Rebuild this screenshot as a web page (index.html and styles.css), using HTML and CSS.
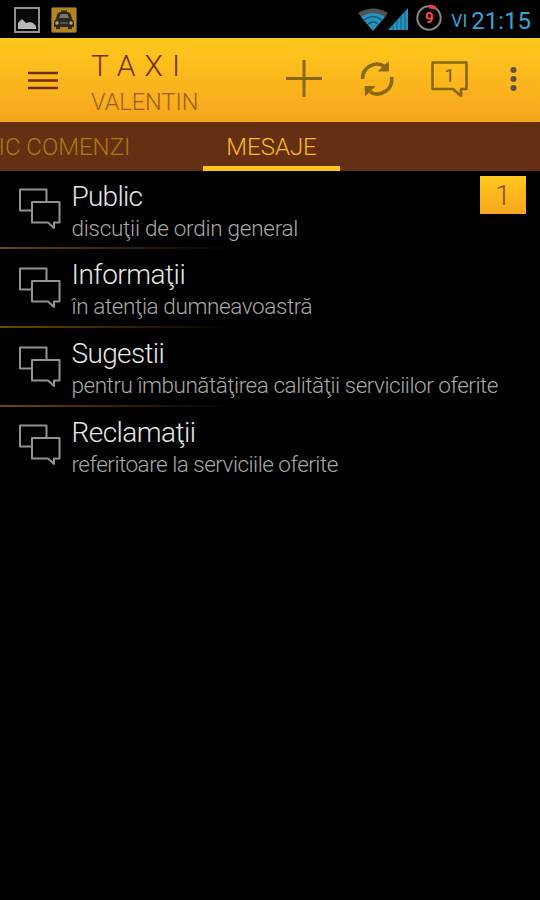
FILE: index.html
```
<!DOCTYPE html>
<html lang="ro">
<head>
<meta charset="utf-8">
<title>Taxi Valentin</title>
<link rel="stylesheet" href="styles.css">
</head>
<body>
<svg width="0" height="0" class="defs" aria-hidden="true">
  <symbol id="chat" viewBox="0 0 42 42">
    <g fill="none" stroke="#929292" stroke-width="2" stroke-linejoin="round">
      <path d="M12 22.500H1V1.500H27.500V13"/>
      <path d="M13 14H40.500V34.500H35V40L29 34.500H13Z"/>
    </g>
  </symbol>
</svg>
<div class="statusbar">
  <svg class="s-picture" width="26" height="26" viewBox="0 0 26 26"><rect x="1" y="1" width="24" height="24" fill="#090909" stroke="#929292" stroke-width="2"/><path d="M4 22V16L8 12L12 16L16 15L19 16L22 19V22Z" fill="#b8b8b8"/></svg>
  <svg class="s-taxi" width="26" height="26" viewBox="0 0 26 26"><rect x=".5" y=".5" width="25" height="25" rx="1" fill="#b5851d" stroke="#665026"/><path d="M10 5V3.500H16V5Q19 5 20 8L21 12Q23 13 23 16V20H21V22H17V20H9V22H5V20H3V16Q3 13 5 12L6 8Q7 5 10 5Z" fill="#292929"/><path d="M8 11L9.500 7H16.500L18 11Z" fill="#77765d"/><path d="M9 16H17" stroke="#50524e" stroke-width="2"/><circle cx="6" cy="16" r="1.700" fill="#c5a54a"/><circle cx="20" cy="16" r="1.700" fill="#c5a54a"/></svg>
  <div class="system">
    <svg width="51" height="26" viewBox="0 0 51 26"><path d="M0 6Q15-3 30 6L26 11Q15 4 4 11Z" fill="#515151"/><path d="M3 10Q15 2 27 10L15 24Z" fill="#2593bd"/><path d="M6 13Q15 6 24 13M10 17Q15 13 20 17" fill="none" stroke="#155875" stroke-width="1.500"/><path d="M30 23L50 1V23Z" fill="#2593bd"/><path d="M35 18V23M39 13V23M43 9V23M47 5V23" stroke="#17627f"/></svg>
    <span class="battery"><svg width="28" height="28" viewBox="0 0 28 28"><circle cx="14" cy="14" r="11.700" fill="none" stroke="#858585" stroke-width="2"/><path d="M14 2.500Q17.500 2.500 20 4" fill="none" stroke="#f33b42" stroke-width="4"/></svg><b>9</b></span>
    <span class="day">VI</span><span class="clock">21:15</span>
  </div>
</div>
<header class="appbar">
  <svg class="menu" width="30" height="20" viewBox="0 0 30 20"><path d="M0 2H30M0 9.500H30M0 17H30" stroke="#6d2c08" stroke-width="2.500"/></svg>
  <div class="brand"><div class="name">TAXI</div><div class="owner">VALENTIN</div></div>
  <svg class="add" width="36" height="37" viewBox="0 0 36 37"><path d="M18 0V37M0 18.500H36" stroke="#87680f" stroke-width="3"/></svg>
  <svg class="refresh" width="34" height="36" viewBox="0 0 34 36"><g fill="none" stroke="#87680f" stroke-width="3.600"><path d="M2.500 18A14.500 14.500 0 0 1 24 5"/><path d="M31.500 16A14.500 14.500 0 0 1 10 31"/></g><path d="M18.500 10L28.500 1V10ZM5 25.500H15L5.500 34.500Z" fill="#87680f" stroke="#87680f"/></svg>
  <div class="note"><svg width="37" height="37" viewBox="0 0 37 37"><path d="M1.500 1.500H35.500V28H30V35L22 28H1.500Z" fill="none" stroke="#87680f" stroke-width="2.600" stroke-linejoin="round"/></svg><span>1</span></div>
  <svg class="more" width="7" height="26" viewBox="0 0 7 26"><g fill="#5b5248"><circle cx="3.500" cy="4" r="3"/><circle cx="3.500" cy="13" r="3"/><circle cx="3.500" cy="22" r="3"/></g></svg>
</header>
<nav class="tabs"><span class="previous">IC COMENZI</span><span class="selected">MESAJE</span></nav>
<main>
  <section class="row"><svg class="chat"><use href="#chat"/></svg><div class="copy"><h2 class="t1">Public</h2><p class="p1">discuţii de ordin general</p></div><span class="count">1</span></section>
  <section class="row"><svg class="chat"><use href="#chat"/></svg><div class="copy"><h2 class="t2">Informaţii</h2><p class="p2">în atenţia dumneavoastră</p></div></section>
  <section class="row"><svg class="chat"><use href="#chat"/></svg><div class="copy"><h2 class="t3">Sugestii</h2><p class="p3">pentru îmbunătăţirea calităţii serviciilor oferite</p></div></section>
  <section class="row"><svg class="chat"><use href="#chat"/></svg><div class="copy"><h2 class="t4">Reclamaţii</h2><p class="p4">referitoare la serviciile oferite</p></div></section>
</main>
</body>
</html>
```
FILE: styles.css
```
* { box-sizing: border-box; }
body { margin: 0; height: 900px; overflow: hidden; background: #000; font-family: Roboto, "Liberation Sans", sans-serif; font-weight: 300; }
svg { display: block; flex: none; }
.defs { position: absolute; }
h2, p { margin: 0; font-weight: 300; white-space: nowrap; }
.statusbar { height: 37.500px; display: flex; align-items: flex-start; padding: 7px 9px 0 14px; }
.s-taxi { margin-left: 11px; }
.system { margin-left: auto; display: flex; align-items: flex-start; color: #31a5d3; font-weight: 400; }
.battery { display: grid; place-items: center; margin: -3px 0 0 6px; }
.battery svg, .battery b { grid-area: 1 / 1; }
.battery b { color: #ff454b; font-size: 15px; line-height: 20px; font-weight: 700; }
.day { margin-left: 8px; font-size: 17.500px; line-height: 29px; }
.clock { margin-left: 4px; font-size: 24px; line-height: 28px; }
.appbar { height: 84.500px; display: flex; align-items: flex-start; padding-left: 28px; background: linear-gradient(#ffc91c, #f7a51e); }
.menu { margin-top: 33px; }
.brand { width: 194px; padding: 11.500px 0 0 33px; }
.name { color: #6e3108; font-size: 30px; line-height: 34px; letter-spacing: 9px; }
.owner { color: #986014; font-size: 23.500px; line-height: 39px; }
.add { margin: 22.500px 0 0 34px; }
.refresh { margin: 23.500px 0 0 37.500px; }
.note { display: grid; margin: 23.500px 0 0 37.500px; color: #785c12; }
.note svg, .note span { grid-area: 1 / 1; }
.note span { text-align: center; font-size: 19px; line-height: 29px; font-weight: 400; }
.more { margin: 28.500px 0 0 41.500px; }
.tabs { height: 48.500px; display: flex; background: #652f14; font-size: 24px; line-height: 50px; }
.previous { width: 203px; color: #ad7a15; white-space: nowrap; text-indent: -1.500px; }
.selected { width: 137px; height: 48.500px; text-align: center; color: #f5bd20; border-bottom: 5px solid #ffc71a; }
.row { height: 78.800px; display: flex; align-items: flex-start; padding: 0 14px 0 19px; background: linear-gradient(90deg, #704807, transparent) 0 100% / 235px 2px no-repeat; }
.row:last-child { background: none; }
.chat { width: 42px; height: 42px; margin-top: 17.500px; }
.copy { padding: 8px 0 0 10.500px; }
h2 { color: #e6e6e6; font-size: 28px; line-height: 35px; }
p { color: #a8a8a8; font-size: 22.500px; line-height: 29px; }
.t1 { letter-spacing: -.75px; }
.t2 { letter-spacing: -.5px; }
.t3 { letter-spacing: -.65px; }
.t4 { letter-spacing: -.55px; }
.p1 { letter-spacing: -.26px; }
.p2 { letter-spacing: -.38px; }
.p3 { letter-spacing: -.46px; }
.p4 { letter-spacing: -.5px; }
.count { width: 46px; height: 38px; margin: 5px 0 0 auto; text-align: center; color: #8d4c0c; background: linear-gradient(#ffc91c, #f7a51e); font-size: 27px; line-height: 41px; }
```
